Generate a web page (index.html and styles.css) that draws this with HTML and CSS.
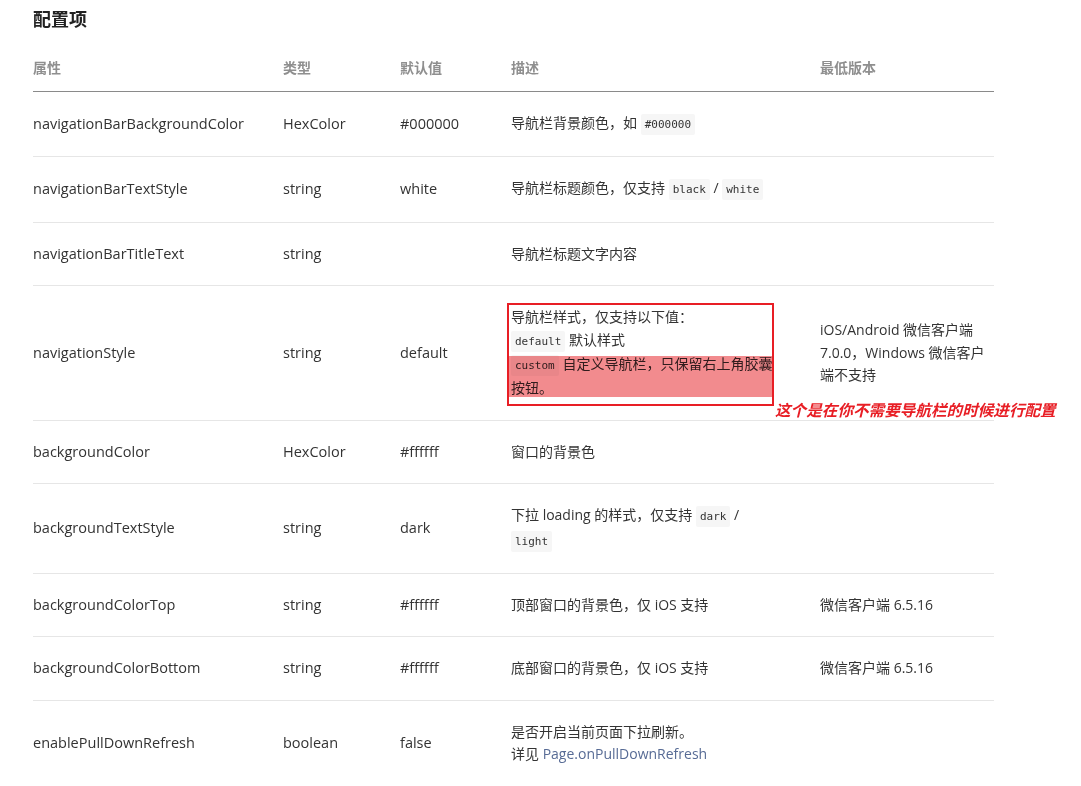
FILE: index.html
```html
<!DOCTYPE html>
<html lang="zh-CN">
<head>
<meta charset="utf-8">
<title>配置项</title>
<link rel="stylesheet" href="styles.css">
</head>
<body>
<div class="page">
  <h2 class="title">配置项</h2>
  <table class="cfg">
    <colgroup>
      <col class="c1"><col class="c2"><col class="c3"><col class="c4"><col class="c5">
    </colgroup>
    <thead>
      <tr><th>属性</th><th>类型</th><th>默认值</th><th>描述</th><th>最低版本</th></tr>
    </thead>
    <tbody>
      <tr><td class="name">navigationBarBackgroundColor</td><td class="name">HexColor</td><td class="name">#000000</td><td class="desc">导航栏背景颜色，如 <code>#000000</code></td><td class="ver"></td></tr>
      <tr><td class="name">navigationBarTextStyle</td><td class="name">string</td><td class="name">white</td><td class="desc">导航栏标题颜色，仅支持 <code>black</code> / <code>white</code></td><td class="ver"></td></tr>
      <tr><td class="name">navigationBarTitleText</td><td class="name">string</td><td class="name"></td><td class="desc">导航栏标题文字内容</td><td class="ver"></td></tr>
      <tr><td class="name">navigationStyle</td><td class="name">string</td><td class="name">default</td>
        <td class="desc"><div class="annot">导航栏样式，仅支持以下值：<br><code>default</code> 默认样式<br><code>custom</code> 自定义导航栏，只保留右上角胶囊按钮。<span class="hl"></span><span class="box"></span><span class="note">这个是在你不需要导航栏的时候进行配置</span></div></td>
        <td class="ver">iOS/Android 微信客户端 7.0.0，Windows 微信客户端不支持</td></tr>
      <tr><td class="name">backgroundColor</td><td class="name">HexColor</td><td class="name">#ffffff</td><td class="desc">窗口的背景色</td><td class="ver"></td></tr>
      <tr><td class="name">backgroundTextStyle</td><td class="name">string</td><td class="name">dark</td><td class="desc">下拉 loading 的样式，仅支持 <code>dark</code> / <code>light</code></td><td class="ver"></td></tr>
      <tr><td class="name">backgroundColorTop</td><td class="name">string</td><td class="name">#ffffff</td><td class="desc">顶部窗口的背景色，仅 iOS 支持</td><td class="ver">微信客户端 6.5.16</td></tr>
      <tr><td class="name">backgroundColorBottom</td><td class="name">string</td><td class="name">#ffffff</td><td class="desc">底部窗口的背景色，仅 iOS 支持</td><td class="ver">微信客户端 6.5.16</td></tr>
      <tr><td class="name">enablePullDownRefresh</td><td class="name">boolean</td><td class="name">false</td><td class="desc">是否开启当前页面下拉刷新。<br>详见 <a class="link" href="#">Page.onPullDownRefresh</a></td><td class="ver"></td></tr>
    </tbody>
  </table>
</div>
</body>
</html>
```
FILE: styles.css
```css
html, body {
  margin: 0;
  padding: 0;
  background: #fff;
}
body {
  font-family: "Open Sans", "Noto Sans CJK SC", sans-serif;
  color: #333;
}
.page {
  padding: 6px 0 0 33px;
}
.title {
  margin: 0;
  font-size: 18px;
  line-height: 26px;
  font-weight: bold;
  color: #222;
}
.cfg {
  margin-top: 25px;
  width: 961px;
  table-layout: fixed;
  border-collapse: collapse;
}
.c1 { width: 250px; }
.c2 { width: 117px; }
.c3 { width: 111px; }
.c4 { width: 309px; }
.c5 { width: 174px; }
.cfg th {
  text-align: left;
  font-size: 14px;
  font-weight: bold;
  color: #8f8f8f;
  line-height: 22px;
  padding: 0 0 12px 0;
  border-bottom: 1px solid #8a8a8a;
}
.cfg td {
  padding: 20px 0;
  vertical-align: middle;
  border-bottom: 1px solid #e6e6e6;
  line-height: 22.4px;
}
.name {
  font-size: 14.5px;
}
.desc {
  font-size: 14px;
  padding-right: 45px !important;
}
.ver {
  font-size: 14px;
}
code {
  font-family: "DejaVu Sans Mono", monospace;
  font-size: 11px;
  background: #f6f6f6;
  color: #333;
  padding: 4px 4px;
  border-radius: 2px;
}
.link {
  color: #576b95;
  text-decoration: none;
}
.annot {
  position: relative;
}
.hl {
  position: absolute;
  left: -3px;
  top: 50px;
  width: 265px;
  height: 41px;
  background: #f28b8e;
  mix-blend-mode: multiply;
}
.box {
  position: absolute;
  left: -4px;
  top: -3px;
  width: 263px;
  height: 99px;
  border: 2px solid #e81e25;
}
.note {
  position: absolute;
  left: 264px;
  top: 94px;
  white-space: nowrap;
  color: #e81e25;
  font-size: 15.6px;
  font-weight: bold;
  font-style: italic;
  line-height: 20px;
}
```
